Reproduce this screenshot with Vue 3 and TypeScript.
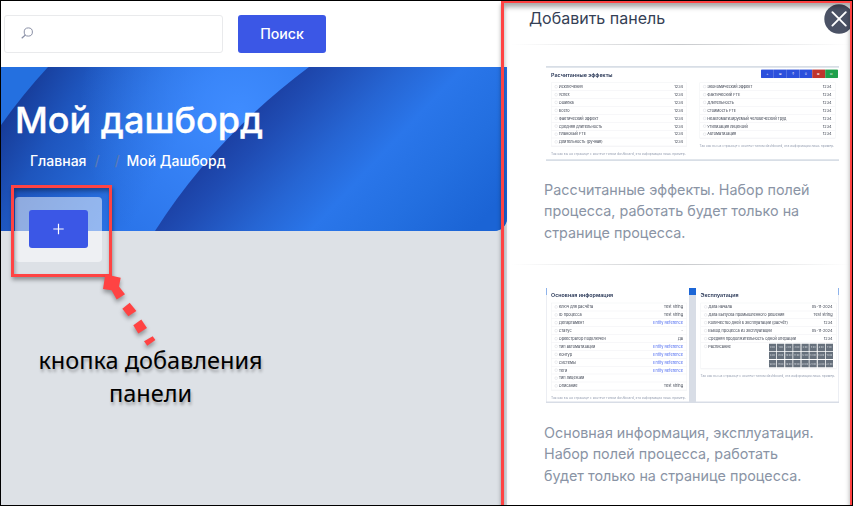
<script setup lang="ts">
interface Row {
  label: string
  value?: string
  link?: boolean
}

const effectsLeft: Row[] = [
  'Исключения', 'Успех', 'Ошибка', 'Всего', 'Фактический эффект',
  'Средняя длительность', 'Плановый FTE', 'Длительность (ручная)',
].map((label) => ({ label, value: '1234' }))

const effectsRight: Row[] = [
  'Экономический эффект', 'Фактический FTE', 'Длительность', 'Стоимость FTE',
  'Неавтоматизируемый человеческий труд', 'Утилизация лицензий', 'Автоматизация',
].map((label) => ({ label, value: '1234' }))

const mainInfo: Row[] = [
  { label: 'Ключ для расчёта', value: 'Test string' },
  { label: 'ID процесса', value: 'Test string' },
  { label: 'Департамент', value: 'Entity Reference', link: true },
  { label: 'Статус', value: '-' },
  { label: 'Оркестратор подключен', value: 'Да' },
  { label: 'Тип автоматизации', value: 'Entity Reference', link: true },
  { label: 'Контур', value: 'Entity Reference', link: true },
  { label: 'Системы', value: 'Entity Reference', link: true },
  { label: 'Теги', value: 'Entity Reference', link: true },
  { label: 'Тип лицензии' },
  { label: 'Описание', value: 'Test string' },
]

const operation: Row[] = [
  { label: 'Дата начала', value: '05-11-2024' },
  { label: 'Дата выпуска промышленного решения', value: 'Test string' },
  { label: 'Количество дней в эксплуатации (расчёт)', value: '1234' },
  { label: 'Вывод процесса из эксплуатации', value: '05-11-2024' },
  { label: 'Средняя продолжительность одной операции', value: '1234' },
]

const hours: string[] = Array.from({ length: 24 }, (_, i) => `${i}:00`)
const tools: string[] = ['+', '⊞', '↑', '↓', '⊠', '⊡']
const note = 'Так как вы на странице с контент типом dashboard, эта информация лишь пример.'
</script>

<template>
  <div class="screen">
    <main class="main">
      <header class="topbar">
        <div class="search">
          <svg width="14" height="14" viewBox="0 0 14 14" fill="none" stroke="#8a90a6" stroke-width="1">
            <circle cx="7.3" cy="5" r="4.1" />
            <path d="M4.4 8 .7 11.2" stroke-width="1.2" />
          </svg>
        </div>
        <button class="btn find">Поиск</button>
      </header>

      <section class="banner">
        <svg class="art" viewBox="0 0 506 164" preserveAspectRatio="none">
          <defs>
            <linearGradient id="mid" gradientUnits="userSpaceOnUse" x1="20" y1="25" x2="160" y2="106">
              <stop offset="0" stop-color="#173c99" />
              <stop offset=".3" stop-color="#1e55bd" />
              <stop offset=".7" stop-color="#266ad9" />
              <stop offset="1" stop-color="#2b75ea" />
            </linearGradient>
            <radialGradient id="glow" gradientUnits="userSpaceOnUse" cx="238" cy="45" r="160">
              <stop offset="0" stop-color="#3f8cff" />
              <stop offset="1" stop-color="#3f8cff" stop-opacity="0" />
            </radialGradient>
            <linearGradient id="right" gradientUnits="userSpaceOnUse" x1="154" y1="143" x2="334" y2="311">
              <stop offset="0" stop-color="#1b3fa2" />
              <stop offset=".12" stop-color="#1f4bb2" />
              <stop offset=".34" stop-color="#2665d3" />
              <stop offset=".52" stop-color="#2a76ea" />
              <stop offset=".75" stop-color="#236fe0" />
              <stop offset="1" stop-color="#1b64d5" />
            </linearGradient>
          </defs>
          <rect width="506" height="164" fill="#2470e0" />
          <path d="M47 0Q22 27 0 58V164H320V0Z" fill="url(#mid)" />
          <path d="M47 0Q22 27 0 58V164H320V0Z" fill="url(#glow)" />
          <path d="M308 0Q212 72 154 164H506V0Z" fill="url(#right)" />
        </svg>
        <h1>Мой дашборд</h1>
        <nav class="crumbs">
          <span>Главная</span><i>/</i><i>/</i><span>Мой Дашборд</span>
        </nav>
      </section>

      <div class="add-card">
        <button class="btn plus">
          <svg width="12" height="12" viewBox="0 0 12 12" stroke="#fff" stroke-width="1.2"><path d="M5.5 .8V11.2M.3 6H10.7" /></svg>
        </button>
      </div>

      <p class="caption">кнопка добавления<br />панели</p>
    </main>

    <aside class="drawer">
      <div class="drawer-head">
        <h2>Добавить панель</h2>
        <span class="close">
          <svg width="30" height="30" viewBox="0 0 30 30">
            <circle cx="15" cy="15" r="14.7" fill="#4b5265" />
            <path d="M8.4 8.2 21.8 21.6M21.8 8.2 8.4 21.6" stroke="#fff" stroke-width="1.9" stroke-linecap="round" />
          </svg>
        </span>
      </div>
      <hr class="rule" />

      <div class="thumb effects">
        <div class="page">
          <div class="col">
            <h3>Расчитанные эффекты</h3>
            <ul class="rows">
              <li v-for="r in effectsLeft" :key="r.label"><b></b><span>{{ r.label }}</span><em>{{ r.value }}</em></li>
            </ul>
            <p class="note">{{ note }}</p>
          </div>
          <div class="col">
            <div class="tools"><span v-for="t in tools" :key="t">{{ t }}</span></div>
            <ul class="rows">
              <li v-for="r in effectsRight" :key="r.label"><b></b><span>{{ r.label }}</span><em>{{ r.value }}</em></li>
            </ul>
            <p class="note">{{ note }}</p>
          </div>
        </div>
      </div>
      <p class="desc first-desc">Рассчитанные эффекты. Набор полей<br />процесса, работать будет только на<br />странице процесса.</p>
      <hr class="rule" />

      <div class="thumb info">
        <div class="page">
          <div class="panel">
            <h3>Основная информация</h3>
            <ul class="rows">
              <li v-for="r in mainInfo" :key="r.label"><b></b><span>{{ r.label }}</span><em :class="{ link: r.link }">{{ r.value }}</em></li>
            </ul>
            <p class="note">{{ note }}</p>
          </div>
          <div class="panel">
            <h3>Эксплуатация</h3>
            <ul class="rows">
              <li v-for="r in operation" :key="r.label"><b></b><span>{{ r.label }}</span><em>{{ r.value }}</em></li>
              <li class="tall"><b></b><span>Расписание</span>
                <div class="hours"><i v-for="h in hours" :key="h">{{ h }}</i></div>
              </li>
            </ul>
            <p class="note">{{ note }}</p>
          </div>
        </div>
      </div>
      <p class="desc">Основная информация, эксплуатация.<br />Набор полей процесса, работать<br />будет только на странице процесса.</p>
    </aside>

    <div class="mark mark-drawer"></div>
    <div class="mark mark-add"></div>
    <svg class="arrow" width="80" height="80" viewBox="100 270 80 80" fill="#ff4343">
      <path d="M105.3 274.3 120.7 277.7 119 286.5 125 294.3 116.7 299.4 111.5 290.2 103 289Z" />
      <path d="M122.3 308.7 129.7 302.7 136.4 311 128.3 316.2Z" />
      <path d="M133.3 325.3 141.3 319.6 147 328 138.3 333.4Z" />
      <path d="M144 341.3 152.7 336.2 155.4 340 147.3 345.7Z" />
    </svg>
    <div class="edge"></div>
  </div>
</template>

<style>
body {
  margin: 0;
  overflow: hidden;
}
</style>

<style scoped>
* {
  box-sizing: border-box;
}
.screen {
  position: relative;
  display: flex;
  width: 853px;
  height: 506px;
  padding: 1px;
  overflow: hidden;
  background: #fff;
  font-family: Inter, "Liberation Sans", sans-serif;
}
.edge {
  position: absolute;
  inset: 0;
  border: 1px solid #000;
}
.main {
  width: 506px;
  flex: none;
  background: #dde1e6;
}
.topbar {
  display: flex;
  gap: 15px;
  height: 66px;
  padding: 14px 0 0 3px;
  background: #fff;
}
.search {
  width: 219px;
  height: 38px;
  padding: 11px 0 0 16px;
  border: 1px solid #e9eaec;
  border-radius: 3px;
}
.search svg {
  display: block;
}
.btn {
  display: flex;
  align-items: center;
  justify-content: center;
  padding: 0;
  border: 0;
  border-radius: 3px;
  background: #3b57e6;
  color: #fff;
  font: 500 14.2px Inter, sans-serif;
}
.find {
  width: 88px;
  height: 38px;
  padding-bottom: 1px;
}
.banner {
  position: relative;
  height: 164px;
  padding: 30px 0 0 14px;
  border-radius: 0 0 13px 0;
  overflow: hidden;
  color: #fff;
}
.art {
  position: absolute;
  inset: 0;
  width: 506px;
  height: 164px;
}
h1 {
  position: relative;
  margin: 0;
  font-size: 36px;
  line-height: 46px;
  font-weight: 500;
  -webkit-text-stroke: 0.35px #fff;
}
.crumbs {
  position: relative;
  display: flex;
  padding: 9px 0 0 15px;
  font-size: 14px;
  line-height: 18px;
  font-weight: 500;
}
.crumbs i {
  width: 20px;
  padding-left: 8px;
  font-style: normal;
  color: #5a7ab5;
}
.add-card {
  position: relative;
  width: 87px;
  height: 65px;
  margin: -34px 0 0 14px;
  padding: 13px 14px;
  border-radius: 4px;
  background: rgba(255, 255, 255, 0.5);
}
.plus {
  width: 59px;
  height: 38px;
}
.caption {
  width: 299px;
  margin: 82px 0 0;
  text-align: center;
  color: #000;
  font: 23.5px/33px "Noto Sans", sans-serif;
  text-shadow: 1px 3px 3px rgba(0, 0, 0, 0.28);
}
.drawer {
  width: 345px;
  flex: none;
  background: #fff;
}
.drawer-head {
  display: flex;
  justify-content: space-between;
  height: 43px;
  padding-left: 22px;
}
h2 {
  margin: 6px 0 0;
  color: #344055;
  font-size: 16px;
  line-height: 22px;
  font-weight: 400;
}
.close {
  width: 28px;
  height: 30px;
  margin-top: 3px;
  overflow: hidden;
}
.rule {
  height: 1px;
  margin: 0 2px 0 4px;
  border: 0;
  background: linear-gradient(90deg, transparent, #c8cacd, transparent);
}
.thumb {
  width: 293px;
  margin-left: 39px;
  overflow: hidden;
}
/* Page previews are laid out at four times their size and scaled down. */
.page {
  display: flex;
  width: 1172px;
  transform: scale(0.25);
  transform-origin: 0 0;
  color: #3c4250;
  font-size: 15.4px;
  line-height: 20px;
}
.effects {
  height: 95px;
  margin-top: 21px;
}
.effects .page {
  height: 380px;
  border: solid #d8dee6;
  border-width: 7px 0;
}
.effects .col {
  width: 544px;
  margin-left: 20px;
  padding-top: 14px;
}
.effects .col + .col {
  width: 558px;
  margin-left: 50px;
  padding-top: 6px;
}
h3 {
  margin: 0;
  color: #1d2c4d;
  font-size: 21.5px;
  line-height: 28px;
  font-weight: 600;
  white-space: nowrap;
}
.rows {
  width: 544px;
  margin: 17px 0 0;
  padding: 0;
  list-style: none;
  border: 2px solid #f0f1f3;
}
.rows li {
  display: flex;
  align-items: center;
  height: 31.6px;
  padding: 0 14px 0 13px;
  border-bottom: 2px solid #eeeff2;
  white-space: nowrap;
}
.rows b {
  width: 11px;
  height: 11px;
  margin-right: 5px;
  border: 1.5px solid #b5bac5;
  border-radius: 4px;
}
.rows em {
  margin-left: auto;
  font-style: normal;
}
.rows em.link {
  color: #4a68f0;
}
.note {
  margin: 17px 0 0;
  color: #98a1b3;
  font-size: 13.2px;
  white-space: nowrap;
}
.tools {
  display: flex;
  width: 308px;
  height: 36px;
  margin-left: 246px;
  border-radius: 4px;
  overflow: hidden;
}
.effects .tools + .rows {
  margin-top: 17px;
}
.tools span {
  flex: 1;
  background: #2c50dc;
  color: #fff;
  font-size: 13px;
  line-height: 36px;
  text-align: center;
}
.tools span:nth-child(5) {
  background: #c0342d;
}
.tools span:nth-child(6) {
  background: #1fa04c;
}
.desc {
  margin: 18.5px 0 0 37px;
  color: #8a94a5;
  font-size: 14.35px;
  line-height: 21.5px;
  white-space: nowrap;
}
.first-desc {
  margin: 17.5px 0 21px 37px;
}
.info {
  height: 115px;
  margin-top: 23px;
}
.info .page {
  height: 460px;
  padding: 0 2px;
  gap: 28px;
  background: linear-gradient(#1c66d6 0 26px, #d8dde6 26px);
}
.panel {
  width: 570px;
  height: 454px;
  padding: 14px 0 0 18px;
  background: #fff;
}
.info .rows {
  margin-top: 17px;
}
.tall.tall {
  align-items: flex-start;
  height: 104px;
  padding-top: 4px;
}
.tall b {
  margin-top: 5px;
}
.hours {
  display: grid;
  grid-template-columns: repeat(8, 29px);
  gap: 3.5px;
  margin: 0 -2px 0 auto;
}
.hours i {
  height: 29px;
  background: #66707c;
  color: #d8dce2;
  font-size: 9px;
  line-height: 29px;
  font-style: normal;
  text-align: center;
}
.mark {
  position: absolute;
  border: 3px solid #ff4343;
}
.mark-drawer {
  left: 501px;
  top: 1px;
  width: 351px;
  height: 520px;
  border-right-width: 2px;
  border-top-width: 2px;
  box-shadow: 0 3px 4px rgba(0, 0, 0, 0.35), inset 0 4px 5px rgba(0, 0, 0, 0.35);
}
.mark-add {
  left: 11px;
  top: 185px;
  width: 101px;
  height: 92px;
  box-shadow: 1px 3px 4px rgba(0, 0, 0, 0.35), inset 1px 3px 4px rgba(0, 0, 0, 0.35);
}
.arrow {
  position: absolute;
  left: 100px;
  top: 270px;
  filter: drop-shadow(0 3px 2px rgba(0, 0, 0, 0.35));
}
</style>
